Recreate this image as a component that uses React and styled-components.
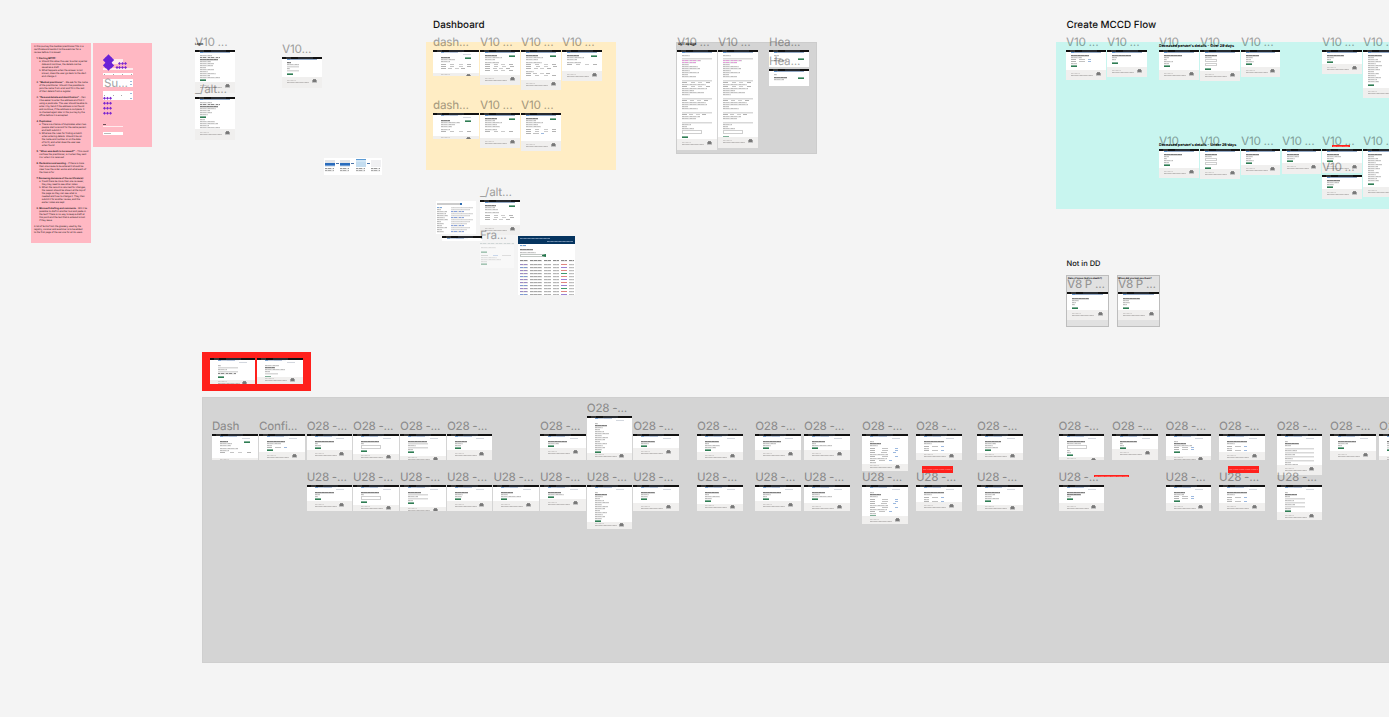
import React from "react";
import styled, { createGlobalStyle } from "styled-components";

const Global = createGlobalStyle`
  html, body { margin: 0; padding: 0; background: #f4f4f4; }
  body {
    overflow: hidden;
    font-family: Inter, "Liberation Sans", sans-serif;
    text-rendering: geometricPrecision;
  }
  * { box-sizing: border-box; }
`;

const Canvas = styled.main`
  position: relative;
  width: 1389px;
  height: 717px;
  overflow: hidden;
  background: #f4f4f4;
`;

/* Anything with a free place on the canvas */
const Node = styled.div`
  position: absolute;
  left: ${(p) => p.$x}px;
  top: ${(p) => p.$y}px;
  width: ${(p) => (p.$w ? `${p.$w}px` : "auto")};
  height: ${(p) => (p.$h ? `${p.$h}px` : "auto")};
`;

const Section = styled(Node)`
  background: ${(p) => p.$fill};
  border: ${(p) => (p.$edge ? `1px solid ${p.$edge}` : "0")};
`;

const Heading = styled(Node)`
  color: #111;
  font-weight: 500;
  font-size: ${(p) => p.$size}px;
  line-height: ${(p) => p.$size + 2}px;
  white-space: nowrap;
`;

const TinyHeading = styled(Heading)`
  color: #000;
  font-weight: 700;
`;

const FrameLabel = styled.div`
  height: 15px;
  flex: none;
  color: rgba(0, 0, 0, 0.35);
  font-size: 11.6px;
  font-weight: 500;
  line-height: 15px;
  letter-spacing: -0.25px;
  white-space: nowrap;
`;

/* A frame on the canvas: its name above, its page below */
const FrameNode = styled(Node)`
  display: flex;
  flex-direction: column;
`;

const Page = styled.div`
  display: flex;
  flex-direction: column;
  flex: none;
  width: ${(p) => p.$w}px;
  height: ${(p) => p.$h}px;
  background: #fff;
  overflow: hidden;
  opacity: ${(p) => p.$fade || 1};
`;

const TopBar = styled.div`
  flex: none;
  height: 2px;
  background: linear-gradient(90deg, #111 0 4px, #333 4px 9px, #111 9px 16px, #262a30 16px 31px, #111 31px);
`;

const Crumbs = styled.div`
  flex: none;
  height: 1px;
  margin: 0 ${(p) => p.$pad}px;
  background: ${(p) =>
    p.$wide
      ? "linear-gradient(90deg, #7fa6d4 0 3px, #c3cfe0 3px 9px, #b4c3da 9px 17px, #f2f5f9 17px 21px, transparent 21px)"
      : "linear-gradient(90deg, #5f93cf 0 3px, #93a9c6 3px)"};
`;

const UserLine = styled.div`
  flex: none;
  align-self: flex-end;
  width: 8px;
  height: 1px;
  margin: 1px 8px 0 0;
  background: #d3d7de;
`;

const Content = styled.div`
  flex: 1;
  min-height: 0;
  overflow: hidden;
  display: flex;
  flex-direction: column;
  align-items: flex-start;
  padding: 2px ${(p) => p.$pad}px 0;
`;

const Title = styled.div`
  flex: none;
  width: ${(p) => p.$w}px;
  height: 1px;
  margin-bottom: 1px;
  background: repeating-linear-gradient(90deg, #7a7a7a 0 2px, #8f8f8f 2px 3px, #828282 3px 6px, #989898 6px 7px);
  box-shadow: 0 1px 0 #dcdcdc;
`;

const Line = styled.div`
  flex: none;
  width: ${(p) => p.$w}px;
  height: 1px;
  margin-bottom: 1px;
  background: repeating-linear-gradient(
    90deg,
    ${(p) => p.$c || "#bdbdbd"} 0 2px,
    #d0d0d0 2px 3px,
    ${(p) => p.$c || "#c6c6c6"} 3px 6px,
    #d8d8d8 6px 8px
  );
  box-shadow: 0 1px 0 #f3f3f3;
`;

const Field = styled.div`
  flex: none;
  width: ${(p) => p.$w}px;
  height: ${(p) => p.$h || 1}px;
  margin-bottom: 1px;
  background: ${(p) => (p.$h ? "#fff" : "#d8d8d8")};
  border: ${(p) => (p.$h ? "1px solid #cfcfcf" : "0")};
  box-shadow: ${(p) => (p.$h ? "none" : "0 1px 0 #ececec")};
`;

const Button = styled.div`
  flex: none;
  align-self: ${(p) => (p.$end ? "flex-end" : "flex-start")};
  width: 6px;
  height: 2px;
  margin: ${(p) => (p.$end ? "0 0 -2px" : "0 0 1px")};
  background: linear-gradient(#7fb097 0 1px, #2f7d53 1px);
`;

const Row = styled.div`
  flex: none;
  display: flex;
  justify-content: space-between;
  width: ${(p) => p.$w}px;
  height: 1px;
  margin-bottom: 1px;
`;

const Cell = styled.span`
  width: ${(p) => p.$w}px;
  height: 1px;
  background: ${(p) => p.$c};
`;

const Space = styled.div`
  flex: none;
  height: ${(p) => p.$h}px;
`;

const Footer = styled.div`
  flex: none;
  display: flex;
  align-items: flex-start;
  justify-content: space-between;
  height: ${(p) => p.$h}px;
  padding: ${(p) => (p.$h > 7 ? 2 : 1)}px ${(p) => p.$pad}px 0;
  background: #f0efee;
`;

const FooterText = styled.div`
  width: ${(p) => p.$w}px;
  height: 3px;
  margin-top: ${(p) => (p.$deep ? 1 : 0)}px;
  background:
    repeating-linear-gradient(90deg, #bcbab9 0 2px, #cac8c7 2px 4px, #c2c0bf 4px 7px, #d0cecd 7px 9px) 0 2px / 100% 1px no-repeat,
    repeating-linear-gradient(90deg, #cfcdcc 0 2px, #dcdad9 2px 4px) 0 0 / 40% 1px no-repeat;
`;

const Crest = styled.div`
  width: 5px;
  height: 4px;
  background:
    linear-gradient(#8a8a8a, #8a8a8a) 1px 0 / 3px 1px no-repeat,
    linear-gradient(90deg, #a4a4a4 0 1px, #787878 1px 4px, #a4a4a4 4px) 0 1px / 100% 2px no-repeat,
    linear-gradient(#c4c4c4, #c4c4c4) 0 3px / 100% 1px no-repeat;
`;

/* T title, L line, P pink line, D dark line, F field, X outlined field,
   B button, E button at the right, R table row, K row with a link, G space */
function Item({ code }) {
  const kind = code[0];
  const n = Number(code.slice(1)) || 0;
  switch (kind) {
    case "T": return <Title $w={n} />;
    case "L": return <Line $w={n} />;
    case "P": return <Line $w={n} $c="#e39ada" />;
    case "D": return <Line $w={n} $c="#8a8a8a" />;
    case "F": return <Field $w={n} />;
    case "X": return <Field $w={n} $h={n > 17 ? 4 : 3} />;
    case "B": return <Button />;
    case "E": return <Button $end />;
    case "G": return <Space $h={n} />;
    case "R": return (
      <Row $w={n}>
        <Cell $w={5} $c="#b4b4b4" /><Cell $w={4} $c="#c4c4c4" />
        <Cell $w={4} $c="#cccccc" /><Cell $w={4} $c="#b4b4b4" />
      </Row>
    );
    case "K": return (
      <Row $w={n}>
        <Cell $w={5} $c="#b4b4b4" /><Cell $w={6} $c="#c2c2c2" /><Cell $w={3} $c="#9db9df" />
      </Row>
    );
    default: return null;
  }
}

function Mini({ x, y, w = 40, h, foot, body, label }) {
  const wide = w > 42;
  const pad = wide ? 8 : 5;
  return (
    <FrameNode $x={x} $y={label ? y - 15 : y} $w={w}>
      {label && <FrameLabel>{label}</FrameLabel>}
      <Page $w={w} $h={h}>
        <TopBar />
        <Crumbs $pad={pad} $wide={wide} />
        {wide && <UserLine />}
        <Content $pad={pad}>
          {body.split(" ").map((c, i) => <Item key={i} code={c} />)}
        </Content>
        {foot > 0 && (
          <Footer $h={foot} $pad={pad}>
            <FooterText $w={22} $deep={foot > 7} />
            {foot > 2 && <Crest />}
          </Footer>
        )}
      </Page>
    </FrameNode>
  );
}

/* ---- notes ---- */
const NoteText = styled.div`
  padding: 2px 0 0 3px;
  color: #2a1a1d;
  font-size: 2.25px;
  line-height: 3px;
  white-space: nowrap;
`;
const NoteLine = styled.div`
  height: 3px;
  padding-left: ${(p) => p.$in * 2.6}px;
  font-weight: ${(p) => (p.$bold ? 700 : 400)};
`;

const NOTES = [
  [0, "In this journey the medical practitioner fills in a"], [0, "certificate and sends it to the examiner for a"], [0, "review before it is issued."], [0, ""],
  [1, "1. Starting MCCD:", 1],
  [2, "a. Should this allow the user to enter a partial"], [3, "date and continue, the details can be"], [3, "saved as a draft."],
  [2, "b. What happens when the answer is not"], [3, "known, does the user go back to the start"], [3, "and change it."], [0, ""],
  [1, "2. “Medical practitioner” - We ask for the name", 0, 24], [2, "of the practitioner. Should it be possible to"], [2, "pick the name from a list and fill in the rest"], [2, "of their details from a register."], [0, ""],
  [1, "3. “Personal details and identification” - Can", 0, 40], [2, "it be easier to enter the address and find it"], [2, "using a postcode. The user should be able to"], [2, "enter it by hand if the address is not found"], [2, "and continue, if the address is complete. It"], [2, "is checked again later in the journey by the"], [2, "office before it is accepted."], [0, ""],
  [1, "4. Duplicates:", 1],
  [2, "a. There is a chance of duplicates when two"], [3, "people start a record for the same person"], [3, "and both submit it."],
  [2, "b. What are the rules for finding a match"], [3, "when entering details. Should it be on"], [3, "the name and number or on the date"], [3, "of birth, and what does the user see"], [3, "when found."], [0, ""],
  [1, "5. “When was death to be issued?” - This could", 0, 33], [2, "confuse the practitioner, is it when they sent"], [2, "it or when it is received."], [0, ""],
  [1, "6. Declaration and sending - If there is more", 0, 26], [2, "than one cause to be entered it should be"], [2, "clear how the order works and what each of"], [2, "the lines is for."], [0, ""],
  [1, "7. Reviewing decisions of the certificate(s):", 1],
  [2, "a. Could there be more than one reviewer,"], [3, "they may need to see other notes."],
  [2, "b. When the record is returned for changes,"], [3, "the reason should be shown at the top of"], [3, "the page so they can see what is"], [3, "needed and how to change it. They then"], [3, "submit it for another review, and the"], [3, "earlier notes are kept."], [0, ""],
  [1, "8. Microsoft drafting and comments - Will it be", 0, 35], [2, "possible to draft in another tool and paste in"], [2, "the text? There is no way to keep a draft at"], [2, "this point and the text that is entered is lost"], [2, "if they leave."], [0, ""],
  [0, "A list of terms from the glossary used by the"], [0, "registry, coroner and examiner is to be added"], [0, "to the first page of the service for all its users."],
];

function Note() {
  return (
    <Section $x={31} $y={43} $w={60} $h={200} $fill="#ffb8c3">
      <NoteText>
        {NOTES.map(([indent, text, bold, cut], i) => (
          <NoteLine key={i} $in={indent} $bold={bold}>
            {cut ? <><b>{text.slice(0, cut)}</b>{text.slice(cut)}</> : text}
          </NoteLine>
        ))}
      </NoteText>
    </Section>
  );
}

/* ---- component sheet ---- */
const Sheet = styled(Section)`
  display: flex;
  flex-direction: column;
  align-items: flex-start;
  padding: 16px 10px 0;
`;
const Strap = styled.div`
  flex: none;
  display: flex;
  justify-content: space-between;
  align-items: ${(p) => p.$align || "center"};
  width: ${(p) => p.$w}px;
  height: ${(p) => p.$h}px;
  margin: 0 0 ${(p) => p.$after || 0}px ${(p) => p.$inset || 0}px;
  padding: 0 1px;
  background: rgba(255, 255, 255, ${(p) => (p.$soft ? 0.7 : 1)});
`;
const Dot = styled.span`
  width: ${(p) => p.$w || 1}px;
  height: 1px;
  background: ${(p) => p.$c || "#a6a6a6"};
`;
const Links = styled.span`
  display: flex;
  flex-direction: column;
  gap: ${(p) => p.$gap}px;
`;
const Caption = styled.div`
  flex: none;
  width: 3px;
  height: 1px;
  margin: 24px 0 1px;
  background: #6d4e54;
`;

const DiamondArt = styled.svg`
  display: block;
`;

function Diamonds() {
  const big = [[5.5, 3.4], [2.9, 6], [8.1, 6], [5.5, 8.7], [2.9, 11.4], [8.1, 11.4], [5.5, 13.6]];
  const small = [[16.5, 9.5], [19.5, 9.5], [22.5, 9.5], [14, 13.5], [16.5, 13.5], [19.5, 13.5], [22.5, 13.5]];
  [44.2, 49.2, 54.2, 59.2].forEach((y) => [1.5, 4.5, 7.5].forEach((x) => small.push([x, y])));
  const d = (x, y, r) => `M${x} ${y - r}L${x + r} ${y}L${x} ${y + r}L${x - r} ${y}Z`;
  return (
    <Node $x={103} $y={54}>
      <DiamondArt width="32" height="64" viewBox="0 0 32 64">
        {big.map(([x, y], i) => <path key={i} d={d(x, y, 3.1)} fill="#6a22d6" />)}
        {small.map(([x, y], i) => <path key={`s${i}`} d={d(x, y, 1.5)} fill="#7a25d0" />)}
      </DiamondArt>
    </Node>
  );
}

function Components() {
  const links = (gap) => (
    <Links $gap={gap}><Dot $w={2} $c="#9bb8d8" /><Dot $w={2} $c="#9bb8d8" /></Links>
  );
  return (
    <Sheet $x={93} $y={43} $w={59} $h={104} $fill="#ffb8c3">
      <Strap $w={11} $h={5} $inset={9} $after={4} $soft />
      <Strap $w={30} $h={2} $after={3} $soft />
      <Strap $w={30} $h={2} $after={4}><Dot /><Dot /><Dot /><Dot /></Strap>
      <Strap $w={30} $h={8} $after={4}><FrameLabel>Su...</FrameLabel>{links(2)}</Strap>
      <Strap $w={30} $h={9}><Dot /><Dot /><Dot />{links(4)}</Strap>
      <Caption />
      <Strap $w={20} $h={1} $after={5} $soft />
      <Strap $w={20} $h={3}><Dot $w={7} $c="#b9b9b9" /></Strap>
    </Sheet>
  );
}

/* ---- small composite cards ---- */
const FlowStrip = styled(Node)`
  display: flex;
  justify-content: space-between;
  background: #fff;
  padding: 1px 1px 0;
`;
const FlowCol = styled.div`
  width: 10px;
  display: flex;
  flex-direction: column;
  padding-top: ${(p) => (p.$tall ? 0 : 1)}px;
`;
const FlowShot = styled.div`
  height: ${(p) => (p.$tall ? 8 : 7)}px;
  margin-bottom: 1px;
  background: ${(p) => p.$bg};
`;
const FlowArrow = styled.div`
  width: 3px;
  height: 1px;
  margin-top: 4px;
  background: #4c74a8;
`;

const Spread = styled(Node)`
  display: grid;
  grid-template-columns: 11px 1fr;
  grid-template-rows: 3px 1fr;
  gap: 1px 3px;
  padding: 2px 1px;
  background: #fff;
  overflow: hidden;
`;
const SpreadTop = styled.div`
  grid-column: 1 / -1;
  height: 2px;
  background: linear-gradient(90deg, #ccc 0 23px, #2d6cb0 23px 25px, transparent 25px);
`;

const TableCard = styled(Node)`
  background: #fff;
  overflow: hidden;
`;
const TableBar = styled.div`
  height: 8px;
  display: flex;
  flex-direction: column;
  gap: 2px;
  padding: 2px 2px 0;
  background: #05345f;
`;
const BarLine = styled.span`
  height: 1px;
  width: ${(p) => p.$w}px;
  align-self: ${(p) => (p.$end ? "flex-end" : "flex-start")};
  background: repeating-linear-gradient(90deg, #6b89a8 0 2px, #52749a 2px 4px);
`;
const TableBody = styled.div`
  padding: 1px 1px 0 2px;
`;
const SearchRow = styled.div`
  display: flex;
  height: 3px;
  width: 26px;
  margin: 1px 0 3px;
  border: 1px solid #c2c8c4;
  border-right: 4px solid #23784c;
`;
const TableRow = styled.div`
  display: grid;
  grid-template-columns: 8px 12px 7px 6px 6px 5px;
  column-gap: 2px;
  height: ${(p) => p.$h || 3}px;
`;
const TableCell = styled.span`
  height: 1px;
  background: repeating-linear-gradient(90deg, ${(p) => p.$c} 0 3px, #c4c4c4 3px 4px);
  box-shadow: 0 1px 0 #f0f0f0;
`;
const StatusCell = styled.span`
  height: 1px;
  background: ${(p) => p.$c};
`;

const RESULTS = ["#df8680", "#9b82d3", "#df8680", "#3f9a6d", "#df8680", "#9b82d3", "#df8680", "#9b82d3", "#3f9a6d", "#df8680", "#9b82d3", "#3f9a6d"];

function RequestTable() {
  return (
    <TableCard $x={518} $y={236} $w={57} $h={59}>
      <TableBar><BarLine $w={30} /><BarLine $w={26} $end /></TableBar>
      <TableBody>
        <Line $w={6} $c="#6ea0d6" />
        <Space $h={2} />
        <Title $w={13} />
        <Space $h={1} />
        <Line $w={16} />
        <SearchRow />
        <TableRow $h={4}>
          {[0, 1, 2, 3, 4, 5].map((i) => <TableCell key={i} $c="#888" />)}
        </TableRow>
        {RESULTS.map((c, i) => (
          <TableRow key={i}>
            <TableCell $c={i % 3 === 1 ? "#7f9bd4" : "#9c89c2"} />
            <TableCell $c="#a8a8a8" />
            <TableCell $c="#b2b2b2" />
            <TableCell $c="#b5b5b5" />
            <StatusCell $c={c} />
            <TableCell $c="#bcbcbc" />
          </TableRow>
        ))}
      </TableBody>
    </TableCard>
  );
}

function SearchSpread() {
  return (
    <Spread $x={436} $y={201} $w={40} $h={33}>
      <SpreadTop />
      <div>
        {[5, 4, 10, 9, 11, 8, 11, 4, 7, 5, 10, 5, 7].map((w, i) => <Line key={i} $w={w} $c={i === 0 ? "#7fa9d8" : undefined} />)}
      </div>
      <div>
        {[..."LLALLALLLALLA"].map((k, i) => <Line key={i} $w={k === "A" ? 13 : 22 - (i % 3) * 3} $c={k === "A" ? "#8aa3dc" : "#dadada"} />)}
      </div>
    </Spread>
  );
}

function Strip() {
  const col = (bg, tall) => (
    <FlowCol $tall={tall}><FlowShot $bg={bg} $tall={tall} /><Line $w={9} $c="#999" /><Line $w={9} $c="#aaa" /></FlowCol>
  );
  const blue = "linear-gradient(#e3e5e8 0 3px, #2a6cbc 3px 5px, #6c9bd4 5px 6px, #dfe6ee 6px)";
  return (
    <FlowStrip $x={324} $y={158} $w={58} $h={17}>
      {col(blue)}<FlowArrow />{col(blue)}<FlowArrow />
      {col("linear-gradient(#5b9bd5 0 1px, #d2e6f5 1px 3px, #c4ddf0 3px)", true)}
      <FlowArrow />{col("#f0f0f2")}
    </FlowStrip>
  );
}

const Tag = styled(Node)`
  display: flex;
  align-items: center;
  padding: 0 1px;
  background: #ff201c;
  &::before {
    content: "";
    width: 100%;
    height: 1px;
    background: repeating-linear-gradient(90deg, #ff5a56 0 3px, #ff3a36 3px 4px, #ff4c48 4px 6px);
  }
`;

/* ---- data ---- */
const LONG = "T14 L6 L10 L13 L8 L14 L10 L12 L6 L11 L8 L13 L9 L11 G1 B";
const REVIEW = "L8 G1 F30 P19 P14 L7 L16 L18 L8 L17 L6 L14 G2 F30 R28 L24 R28 L25 L12 L22 L8 G2 F30 R26 L24 L25 L6 L16 G2 F30 R24 L18 L14 G2 F30 L9 L5 L12 X20 G1 B";

const TOP = [
  [195, 50, 40, 43, 11, "L12 D20 T18 L11 L14 L13 L6 L14 L8 L16 L10 L20 B", "V10 ..."],
  [195, 97, 40, 43, 11, "L12 D20 T18 L16 L10 L12 L8 B L5 L15 L18 L9 L20", "_/alt..."],
  [282, 57, 40, 31, 11, "T4 L12 F12 L3 F12 G1 B", "V10..."],
  [433, 50, 46, 26, 3, "E T9 L14 L9 G1 R30 R30 R24", "dash..."],
  [480, 50, 40, 35, 10, "E T12 L17 L10 G1 L14 R28 R29 R25 R28", "V10 ..."],
  [521, 50, 40, 40, 10, "E T12 L17 L12 G1 L16 R30 R31 R25 G1 L8 R24 R30", "V10 ..."],
  [562, 50, 40, 31, 10, "E T12 L17 L10 G1 L14 R30", "V10 ..."],
  [433, 113, 46, 26, 3, "E T9 L19 L14 L11 G1 L9 R30", "dash..."],
  [480, 113, 40, 35, 10, "E T12 L10 L17 L12 L15 G1 L12 R28", "V10 ..."],
  [521, 113, 40, 38, 10, "E T12 L10 L17 L12 L15 G1 R30 R30 K18", "V10 ..."],
  [677, 50, 40, 100, 11, REVIEW, "V10 ..."],
  [718, 50, 40, 98, 11, REVIEW, "V10 ..."],
  [769, 50, 40, 17, 0, "L5 G1 E L7 L13", "Hea..."],
  [769, 69, 40, 17, 0, "L3 G1 E T13 L10", "Hea..."],
  [1066, 50, 40, 30, 10, "T18 L11 K20 K20 L6 B", "V10 ..."],
  [1107, 50, 40, 27, 10, "T19 L5 L4 G1 B", "V10 ..."],
  [1159, 50, 40, 30, 10, "T18 L5 L3 L9 L5 B", "V10 ..."],
  [1200, 50, 40, 31, 10, "T12 L7 X12 X12 G1 B", "V10 ..."],
  [1241, 50, 39, 27, 10, "T13 L7 L5 L8 B", "V10 ..."],
  [1322, 50, 40, 24, 10, "T17 L7 L4 B", "V10 ..."],
  [1363, 50, 40, 48, 10, LONG, "V10 ..."],
  [1159, 149, 40, 29, 10, "T18 L5 L3 L9 L5 B", "V10 ..."],
  [1200, 149, 40, 30, 10, "T12 L7 X12 X12 G1 B", "V10 ..."],
  [1241, 149, 39, 26, 10, "T13 L7 L5 L8 B", "V10 ..."],
  [1282, 149, 39, 25, 11, "T12 L12 L8 B", "V10 ..."],
  [1322, 149, 40, 24, 10, "T12 L14 L7 B", "V10 ..."],
  [1322, 175, 40, 24, 10, "T13 L12 L7 B", "V10 ..."],
  [1363, 149, 40, 48, 10, LONG, "V10 ..."],
  [480, 200, 40, 35, 10, "E T11 L10 L13 G1 L14 G1 R28 R29 R25", "_/alt..."],
  [210, 358, 45.4, 26, 4, "L3 F20 L9 F20 D18 G1 B"],
  [257, 358, 45.8, 26, 7, "L14 T10 L20 L5 F13 G1 B"],
];

const LIST = "L3 T12 L8 L5 L9 L14 L7 L13 L10 L5 L12 L8 L10 L7 B";
const SUMMARY = "L4 T11 L8 G1 K28 K28 K26 L18 K28 L17 K22 L6 B";
const CHECK = "T20 L8 G1 K20 L5 K20";

/* x, page height, footer height, content, optional top */
const OVER = [
  [212, 26, 2, "E T8 L12 L11 G1 L18 L9 R31"], [259, 26, 8, "T18 L14 L5 K20 B"],
  [306.7, 26, 10, "T19 L3 L6 B"], [353, 26, 6, "T18 L3 X20 B"],
  [400, 26, 4, "T19 F20 L8 F20 L5 B"], [446.9, 26, 10, "T12 L8 L6 B"],
  [540, 26, 12, "T19 L11 B"], [586.8, 44, 7, LIST, 416], [633.2, 26, 12, "T14 L8 B"],
  [697, 26, 8, "T14 L4 L15 L11 B"], [755.2, 26, 10, "T18 L13 L8 B"], [804, 26, 10, "T13 L4 L20 B"],
  [862, 37, 7, SUMMARY], [916, 26, 7, CHECK], [977, 26, 7, "T16 L11 L8 L13 B"],
  [1058.5, 26, 3, "T18 L14 X20 L3 L4 B"], [1112, 26, 11, "T17 L3 L4 B"],
  [1165.6, 26, 4, "L4 T12 L18 K20 K20 B"], [1219, 26, 8, CHECK],
  [1276.8, 41, 10, "L3 T14 L6 G1 F29 L12 F29 L10 F29 L8 F29 L6 L13 B"],
  [1330, 26, 9, "T18 L10 L4 B"], [1379, 26, 4, "T18 L8 L4 F20 B"],
];
const UNDER = [
  [306.7, 26, 10, "T19 L5 L3 B"], [353, 26, 6, "T18 L3 X20 B"], [400, 26, 4, "T13 F20 L10 F20 L5 B"],
  [446.9, 26, 10, "T13 L8 L7 B"], [493.4, 26, 10, "T12 L7 L20 B"], [540, 26, 12, "T13 L16 B"],
  [586.8, 44, 7, LIST], [633.2, 26, 8, "T14 L8 L7 B"], [697, 26, 7, "T14 L4 L15 L7 B"],
  [755.2, 26, 10, "T18 L8 L4 B"], [804, 26, 8, "T13 L8 L20 B"], [862, 39, 8, SUMMARY],
  [916, 26, 9, CHECK], [977, 26, 6, "T15 L10 L7 L14 B"], [1058.5, 26, 8, "T18 T14 L4 B"],
  [1165.6, 26, 8, "T11 L10 K20 K20 B"], [1219, 26, 8, CHECK],
  [1276.8, 35, 8, "L3 T12 L5 F20 L9 F20 L10 F20 L6 B"],
];
const overLabel = (x) => (x === 212 ? "Dash" : x === 259 ? "Confi..." : "O28 -...");

export default function App() {
  return (
    <>
      <Global />
      <Canvas>
        <Note />
        <Components />
        <Diamonds />

        <Section $x={426} $y={42} $w={190} $h={128} $fill="#ffedc4" />
        <Section $x={676} $y={42} $w={141} $h={112} $fill="#d4d4d4" $edge="#cccccc" />
        <Section $x={1056} $y={42} $w={340} $h={167} $fill="#c8f5ef" />
        <Section $x={202} $y={352} $w={109} $h={39} $fill="#ff201c" />
        <Section $x={202} $y={397} $w={1200} $h={266} $fill="#d4d4d4" $edge="#cfcfcf" />
        <Section $x={1066} $y={275} $w={43} $h={52} $fill="#e1e1e1" $edge="#bdbdbd" />
        <Section $x={1117} $y={275} $w={43} $h={52} $fill="#e1e1e1" $edge="#bdbdbd" />

        <Heading $x={433} $y={19.5} $size={9.9}>Dashboard</Heading>
        <Heading $x={1066.5} $y={19.5} $size={9.9}>Create MCCD Flow</Heading>
        <Heading $x={1066.5} $y={259} $size={7.5}>Not in DD</Heading>

        {TOP.map(([x, y, w, h, foot, body, label]) => (
          <Mini key={`${x}-${y}`} x={x} y={y} w={w} h={h} foot={foot} body={body} label={label} />
        ))}
        <Mini x={1067} y={292} w={41} h={28} foot={10} body="G1 T17 L7 L4 L3 G1 B" label="V8 P ..." />
        <Mini x={1118} y={292} w={41} h={28} foot={10} body="G1 T17 L6 L7 L4 G1 B" label="V8 P ..." />

        <SearchSpread />
        <FrameNode $x={442} $y={236}>
          <Page $w={40} $h={5}><TopBar /><Crumbs $pad={5} $wide /></Page>
        </FrameNode>
        <FrameNode $x={480} $y={228}>
          <FrameLabel>Fra...</FrameLabel>
          <Page $w={34} $h={25} $fade={0.4}>
            <Line $w={34} $c="#9aa" />
            <Content $pad={1}>
              <Line $w={15} /><Space $h={2} /><Button /><Space $h={1} />
              <Row $w={30}><Cell $w={7} $c="#aaa" /><Cell $w={5} $c="#8ad" /><Cell $w={9} $c="#bbb" /></Row>
              <Line $w={16} /><Line $w={20} /><Line $w={6} /><Button />
            </Content>
          </Page>
        </FrameNode>
        <RequestTable />
        <Strip />

        {OVER.map(([x, h, foot, body, top]) => (
          <Mini key={x} x={x} y={top || 434} w={45.6} h={h} foot={foot} body={body} label={overLabel(x)} />
        ))}
        {UNDER.map(([x, h, foot, body]) => (
          <Mini key={x} x={x} y={485} w={45.6} h={h} foot={foot} body={body} label="U28 -..." />
        ))}

        <TinyHeading $x={1159} $y={43} $size={3.7}>Deceased person's details - Over 28 days</TinyHeading>
        <TinyHeading $x={1159} $y={142} $size={3.7}>Deceased person's details - Under 28 days</TinyHeading>
        <TinyHeading $x={678} $y={42} $size={3.2}>UCT design</TinyHeading>
        <TinyHeading $x={195} $y={42} $size={3}>Login</TinyHeading>
        <TinyHeading $x={1068} $y={277} $size={2.4}>Date of issue (before death?)</TinyHeading>
        <TinyHeading $x={1118} $y={277} $size={2.4}>When did you last see them?</TinyHeading>

        <Tag $x={1332} $y={145} $w={18} $h={2} />
        <Tag $x={922} $y={466} $w={31} $h={7} />
        <Tag $x={1228} $y={466} $w={31} $h={7} />
        <Tag $x={1094} $y={475} $w={35} $h={2} />
      </Canvas>
    </>
  );
}
